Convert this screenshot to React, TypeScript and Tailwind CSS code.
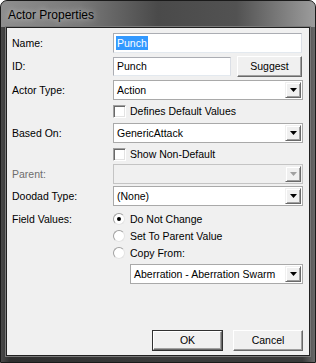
import React from "react";

const Tri = ({ color = "#000" }: { color?: string }) => (
  <svg width="7" height="4" viewBox="0 0 7 4">
    <path d="M0 0H7L3.5 4Z" fill={color} />
  </svg>
);

const DropBtn = ({ disabled }: { disabled?: boolean }) => (
  <div className="w-[16px] h-[16px] mr-[1px] bg-[#f0f0f0] border border-t-[#f0f0f0] border-l-[#f0f0f0] border-r-[#696969] border-b-[#696969] shadow-[inset_1px_1px_0_#ffffff,inset_-1px_-1px_0_#a0a0a0] flex items-center justify-center">
    <Tri color={disabled ? "#a0a0a0" : "#000"} />
  </div>
);

const Combo = ({ text, disabled, className = "" }: { text?: string; disabled?: boolean; className?: string }) => (
  <div
    className={`h-[20px] flex items-center border border-[#a9a9a9] ${disabled ? "bg-[#f0f0f0] border-[#c4c4c4]" : "bg-white"} ${className}`}
  >
    <span className="flex-1 pl-[3px] leading-none">{text}</span>
    <DropBtn disabled={disabled} />
  </div>
);

const TextBox = ({ children, className = "" }: { children: React.ReactNode; className?: string }) => (
  <div className={`bg-white border border-[#abadb3] border-r-[#dbdfe6] border-b-[#e3e9ef] flex items-center pl-[2px] ${className}`}>
    {children}
  </div>
);

const Check = ({ label }: { label: string }) => (
  <div className="flex items-center h-[13px]">
    <div className="w-[13px] h-[13px] bg-white border border-[#a0a0a0] border-r-white border-b-white shadow-[inset_1px_1px_0_#696969,inset_-1px_-1px_0_#e3e3e3]" />
    <span className="ml-[4px] leading-none">{label}</span>
  </div>
);

const Radio = ({ label, checked }: { label: string; checked?: boolean }) => (
  <div className="flex items-center h-[12px]">
    <div className="w-[12px] h-[12px] rounded-full bg-white border border-[#a0a0a0] border-r-[#e3e3e3] border-b-[#e3e3e3] flex items-center justify-center">
      {checked && <div className="w-[4px] h-[4px] rounded-full bg-black" />}
    </div>
    <span className="ml-[5px] leading-none">{label}</span>
  </div>
);

const Btn = ({ children, def, className = "" }: { children: React.ReactNode; def?: boolean; className?: string }) => (
  <div className={`${def ? "border border-[#303030]" : ""} ${className}`}>
    <div className="w-full h-full bg-[#f0f0f0] border border-t-white border-l-white border-r-[#696969] border-b-[#696969] shadow-[inset_-1px_-1px_0_#a0a0a0] flex items-center justify-center leading-none">
      {children}
    </div>
  </div>
);

const Label = ({ children, dim }: { children: React.ReactNode; dim?: boolean }) => (
  <div className={`w-[106px] pl-[5px] shrink-0 leading-none ${dim ? "text-[#6d6d6d]" : ""}`}>{children}</div>
);

export default function App() {
  return (
    <div className="w-[316px] h-[363px] bg-white font-['Liberation_Sans',Arial,sans-serif] text-[10.5px] text-black">
      <div className="w-full h-full flex flex-col rounded-t-[7px] border border-[#1a1a1a] bg-[linear-gradient(to_right,#4a4a4a,#2e2e2e_3%,#3a3a3a_50%,#3a3a3a_96%,#6a6a6a)] overflow-hidden">
        <div className="h-[26px] shrink-0 bg-[linear-gradient(to_right,#8e8e8e,#7a7a7a_25%,#4a4a4a_50%,#525252_75%,#9c9c9c)] flex items-center pl-[7px] pt-[1px]">
          <span className="text-[12px] leading-none [text-shadow:0_0_6px_rgba(255,255,255,0.7)]">
            Actor Properties
          </span>
        </div>
        <div className="flex-1 mx-[5px] mb-[6px] border border-[#202020] bg-[#f0f0f0] flex flex-col pr-[6px] pb-[4px] shadow-[0_0_0_1px_#7a7a7a]">
          {/* Name */}
          <div className="flex items-center mt-[5px] h-[20px]">
            <Label>Name:</Label>
            <TextBox className="flex-1 h-[20px] mr-[1px]">
              <span className="bg-[#3399ff] text-white px-[1px] leading-[14px] h-[14px] flex items-center">Punch</span>
            </TextBox>
          </div>
          {/* ID */}
          <div className="flex items-center mt-[3px] h-[21px]">
            <Label>ID:</Label>
            <TextBox className="w-[118px] h-[19px]">
              <span className="pl-[1px] leading-none">Punch</span>
            </TextBox>
            <Btn className="ml-[6px] w-[65px] h-[21px]">Suggest</Btn>
          </div>
          {/* Actor Type */}
          <div className="flex items-center mt-[3px] h-[20px]">
            <Label>Actor Type:</Label>
            <Combo text="Action" className="flex-1" />
          </div>
          <div className="flex items-center mt-[5px] h-[13px] pl-[106px]">
            <Check label="Defines Default Values" />
          </div>
          {/* Based On */}
          <div className="flex items-center mt-[5px] h-[20px]">
            <Label>Based On:</Label>
            <Combo text="GenericAttack" className="flex-1" />
          </div>
          <div className="flex items-center mt-[5px] h-[13px] pl-[106px]">
            <Check label="Show Non-Default" />
          </div>
          {/* Parent */}
          <div className="flex items-center mt-[3px] h-[20px]">
            <Label dim>Parent:</Label>
            <Combo disabled className="flex-1" />
          </div>
          {/* Doodad */}
          <div className="flex items-center mt-[2px] h-[20px]">
            <Label>Doodad Type:</Label>
            <Combo text="(None)" className="flex-1" />
          </div>
          {/* Field Values */}
          <div className="flex items-center mt-[7px] h-[12px]">
            <Label>Field Values:</Label>
            <Radio label="Do Not Change" checked />
          </div>
          <div className="flex items-center mt-[5px] h-[12px] pl-[106px]">
            <Radio label="Set To Parent Value" />
          </div>
          <div className="flex items-center mt-[5px] h-[12px] pl-[106px]">
            <Radio label="Copy From:" />
          </div>
          <div className="flex items-center mt-[5px] h-[20px] pl-[123px]">
            <Combo text="Aberration - Aberration Swarm" className="flex-1" />
          </div>
          <div className="mt-auto flex justify-end h-[21px]">
            <Btn def className="w-[71px] h-[21px]">OK</Btn>
            <Btn className="ml-[10px] w-[70px] h-[21px]">Cancel</Btn>
          </div>
        </div>
      </div>
    </div>
  );
}
